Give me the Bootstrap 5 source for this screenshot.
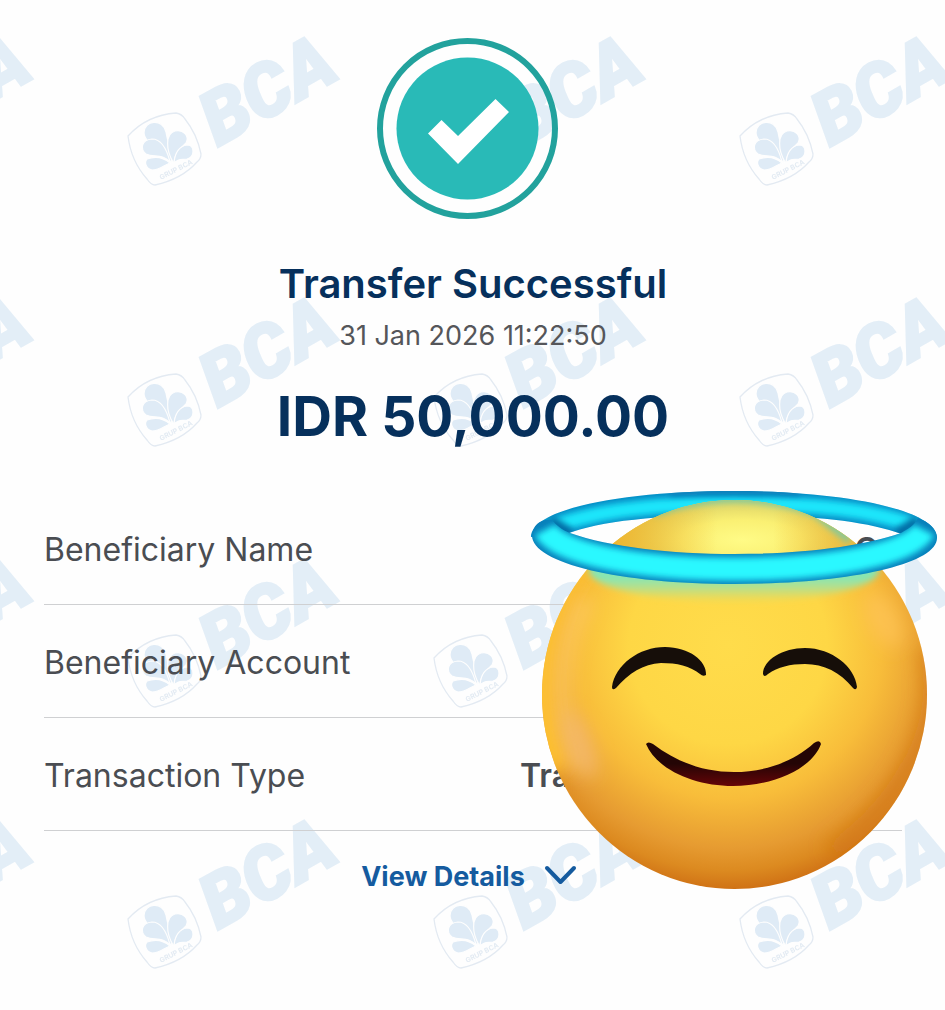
<!DOCTYPE html>
<html lang="en">
<head>
<meta charset="utf-8">
<meta name="viewport" content="width=device-width, initial-scale=1">
<title>Transfer Successful</title>
<link href="https://cdn.jsdelivr.net/npm/bootstrap@5.3.0/dist/css/bootstrap.min.css" rel="stylesheet">
<style>
  body { font-family: Inter, "Liberation Sans", sans-serif; background: #fefefe; color: #4a4d52; }
  .receipt { min-height: 100vh; padding: 38px 43px 40px 44px; }
  .watermark { z-index: 0; }
  .receipt-body { z-index: 1; }
  .navy { color: #06305c; }
  .title { font-size: 40px; line-height: 48px; margin-top: 41px; font-weight: 600; }
  .stamp { font-size: 27px; line-height: 36px; margin-top: 10px; color: #55565a; }
  .amount { font-size: 55px; line-height: 64px; margin-top: 30px; font-weight: 700; }
  .details { margin-top: 44px; font-size: 32px; line-height: 36px; }
  .detail-row { padding: 40px 0 36px; border-bottom: 1px solid #cfd0d2; min-height: 113px; }
  .detail-row dt { font-weight: 400; }
  .detail-row dd { font-weight: 600; }
  .value-start { width: 382px; }
  .value-end { padding-right: 24px; }
  .more { font-size: 27px; line-height: 40px; margin-top: 26px; font-weight: 700; color: #155b9f; }
  .sticker { right: -43px; top: -7px; }
</style>
</head>
<body>
<main class="receipt position-relative overflow-hidden">
  <svg class="watermark position-absolute top-0 start-0 w-100 h-100" aria-hidden="true">
    <defs>
      <pattern id="brand" width="306" height="261" patternUnits="userSpaceOnUse" x="103" y="0">
        <g transform="translate(24 35)">
          <text transform="translate(91 112) rotate(-29.500)" font-family="Roboto, sans-serif" font-weight="900" font-style="italic" font-size="74" fill="#e3eef7" stroke="#e3eef7" stroke-width="2.500">BCA</text>
          <path d="M1 101Q20 80 49 78Q55 79 58 84Q70 99 74 119Q74 124 70 127Q55 144 28 150Q24 150 20 144Q4 126 1 101Z" fill="none" stroke="#e3eaf2" stroke-width="1.3"/>
          <g fill="#dfebf6" stroke="#fefefe" stroke-width="1.200">
            <path d="M44 128C41 117 18 111 17 98C17 85 36 83 39 97C41 107 43 115 45 128Z"/>
            <path d="M46 127C39 115 38 99 48 96C56 94 63 101 59 108C53 114 48 118 47 127Z"/>
            <path d="M43 127C35 118 27 123 19 119C13 114 14 105 25 104C35 104 40 115 43 127Z"/>
            <path d="M43 128C37 130 33 135 25 135C19 134 17 127 20 124C28 121 36 122 43 128Z"/>
            <path d="M47 128C48 117 53 111 60 110C68 110 68 122 60 124C55 125 52 123 47 128Z"/>
          </g>
          <text transform="translate(34 145) rotate(-27)" font-family="Inter, sans-serif" font-weight="700" font-size="7" fill="#e3ebf3">GRUP BCA</text>
        </g>
      </pattern>
    </defs>
    <rect width="100%" height="100%" fill="url(#brand)"/>
  </svg>

  <div class="receipt-body position-relative">
    <header class="text-center">
      <svg class="d-block mx-auto" width="193" height="181" viewBox="0 0 193 181" role="img" aria-label="Success">
        <circle cx="90.500" cy="90.500" r="87.500" fill="none" stroke="#22a29d" stroke-width="6"/>
        <circle cx="90.500" cy="90.500" r="71" fill="#29bab7"/>
        <path d="M51 95.500L64.500 82L81 98L118.500 61L132 74L81 126Z" fill="#fff"/>
      </svg>
      <h1 class="title navy mb-0">Transfer Successful</h1>
      <p class="stamp mb-0">31 Jan 2026 11:22:50</p>
      <p class="amount navy mb-0">IDR 50,000.00</p>
    </header>

    <section class="details position-relative">
      <dl class="mb-0">
        <div class="detail-row d-flex justify-content-between">
          <dt>Beneficiary Name</dt><dd class="value-end mb-0">C</dd>
        </div>
        <div class="detail-row d-flex justify-content-between">
          <dt>Beneficiary Account</dt>
        </div>
        <div class="detail-row d-flex justify-content-between">
          <dt>Transaction Type</dt><dd class="value-start mb-0">Tra</dd>
        </div>
      </dl>

      <svg class="sticker position-absolute" width="420" height="410" viewBox="525 485 420 410" role="img" aria-label="Smiling face with halo">
        <defs>
          <radialGradient id="skin" gradientUnits="userSpaceOnUse" cx="728" cy="645" r="248">
            <stop offset="0" stop-color="#ffdc4b"/><stop offset=".4" stop-color="#fed745"/>
            <stop offset=".62" stop-color="#f8bd3a"/><stop offset=".82" stop-color="#e69b31"/><stop offset=".91" stop-color="#dc8a20"/><stop offset="1" stop-color="#cd6d13"/>
          </radialGradient>
          <linearGradient id="tint" gradientUnits="userSpaceOnUse" x1="0" y1="578" x2="0" y2="608">
            <stop offset="0" stop-color="#86e6b4"/><stop offset=".4" stop-color="#b8e08b" stop-opacity=".85"/><stop offset="1" stop-color="#ffd640" stop-opacity="0"/>
          </linearGradient>
          <radialGradient id="crown" gradientUnits="userSpaceOnUse" cx="0" cy="0" r="1" gradientTransform="translate(742 540) scale(135 44)">
            <stop offset="0" stop-color="#fffb86"/><stop offset=".45" stop-color="#faf073"/><stop offset=".8" stop-color="#e2d868"/><stop offset="1" stop-color="#d9c65a"/>
          </radialGradient>
          <linearGradient id="crownSide" gradientUnits="userSpaceOnUse" x1="610" y1="0" x2="865" y2="0">
            <stop offset="0" stop-color="#f0b62f"/><stop offset=".42" stop-color="#f0b62f" stop-opacity="0"/><stop offset=".64" stop-color="#f0b62f" stop-opacity="0"/><stop offset="1" stop-color="#efb63a"/>
          </linearGradient>
          <linearGradient id="mouth" x1="0" y1="0" x2="0" y2="1"><stop offset=".5" stop-color="#240505"/><stop offset="1" stop-color="#650507"/></linearGradient>
          <filter id="soft3" filterUnits="userSpaceOnUse" x="500" y="460" width="470" height="460"><feGaussianBlur stdDeviation="3"/></filter>
          <filter id="soft10" filterUnits="userSpaceOnUse" x="500" y="460" width="470" height="460"><feGaussianBlur stdDeviation="9"/></filter>
          <clipPath id="face"><ellipse cx="734.500" cy="694.500" rx="192.500" ry="194.500"/></clipPath>
          <path id="backShape" d="M531 537C531 509 622 491 734 491S937 510 937 538L902 534C865 521 810 515 734 515S600 521 566 534Z"/>
          <path id="frontShape" d="M532 535C533 525 541 518 552 520C556 525 562 530 570 533C610 547 670 554 734 554C800 554 860 547 901 533C909 528 914 526 918 518C929 522 937 529 937 538C937 565 845 584 734 584C620 584 531 563 532 535Z"/>
          <clipPath id="backClip"><use href="#backShape"/></clipPath>
          <clipPath id="frontClip"><use href="#frontShape"/></clipPath>
        </defs>
        <use href="#backShape" fill="#068ac4"/>
        <g clip-path="url(#backClip)">
          <path filter="url(#soft3)" d="M545 530C585 513 640 504 734 504S885 512 924 530" fill="none" stroke="#1fe6fb" stroke-width="15"/>
          <path filter="url(#soft3)" d="M550 520L571 534M918 520L897 534" stroke="#0667a2" stroke-width="10"/>
          <path filter="url(#soft3)" d="M670 491Q734 489 800 491" fill="none" stroke="#087fba" stroke-width="9"/>
        </g>

        <g clip-path="url(#face)">
          <rect x="540" y="498" width="390" height="394" fill="url(#skin)"/>
          <path d="M586 550C536 610 530 700 558 770" fill="none" stroke="#ffc22f" stroke-width="26" filter="url(#soft10)"/>
          <path d="M586 600C556 650 554 715 582 770" fill="none" stroke="#ffcf7b" stroke-opacity=".6" stroke-width="14" filter="url(#soft10)"/>
          <ellipse cx="581" cy="745" rx="11" ry="36" transform="rotate(-20 581 745)" fill="#f3b878" fill-opacity=".7" filter="url(#soft10)"/>
          <ellipse cx="884" cy="620" rx="15" ry="30" transform="rotate(-28 884 620)" fill="#ffc558" fill-opacity=".7" filter="url(#soft10)"/>
          <path d="M926 650C944 720 905 800 830 852" fill="none" stroke="#cf7011" stroke-opacity=".6" stroke-width="16" filter="url(#soft10)"/>
          <ellipse cx="734" cy="570" rx="145" ry="32" fill="url(#tint)" filter="url(#soft3)"/>
          <rect x="540" y="498" width="390" height="68" fill="url(#crown)"/>
          <rect x="540" y="498" width="390" height="68" fill="url(#crownSide)"/>
          <path d="M655 512Q734 484 815 512L850 540" fill="none" stroke="#6bcbae" stroke-opacity=".8" stroke-width="9" filter="url(#soft3)"/>
        </g>

        <use href="#frontShape" fill="#087fba"/>
        <g clip-path="url(#frontClip)">
          <path filter="url(#soft3)" d="M545 530C558 554 640 569 734 569S911 555 924 530" fill="none" stroke="#2cf8ff" stroke-width="23"/>
        </g>

        <g fill="#160e09">
          <path d="M612 687C615 665 639 647 665 647C689 647 707 661 706 675Q703 677 700 674C690 666 677 663 661 663C643 664 629 673 616 688Q612 691 612 687Z"/>
          <path d="M763 674C763 660 783 648 805 648C832 648 855 667 857 687Q856 691 853 688C840 672 824 664 805 664C790 664 778 667 768 674Q764 678 763 674Z"/>
        </g>
        <path d="M646 744Q648 741 653 744C678 763 705 772 734 772C763 772 792 763 814 743Q820 739 821 744C812 769 773 786 733 786C695 786 657 770 646 744Z" fill="url(#mouth)"/>
      </svg>
    </section>

    <div class="text-center">
      <button type="button" class="more btn border-0 p-0 d-inline-flex align-items-center gap-3">
        <span>View Details</span>
        <svg width="44" height="24" viewBox="0 0 44 24" fill="none" stroke="#155b9f" stroke-width="4" stroke-linecap="round" stroke-linejoin="round" aria-hidden="true"><path d="M6 3L19.500 17L33 3"/></svg>
      </button>
    </div>
  </div>
</main>
<script src="https://cdn.jsdelivr.net/npm/bootstrap@5.3.0/dist/js/bootstrap.bundle.min.js"></script>
</body>
</html>
